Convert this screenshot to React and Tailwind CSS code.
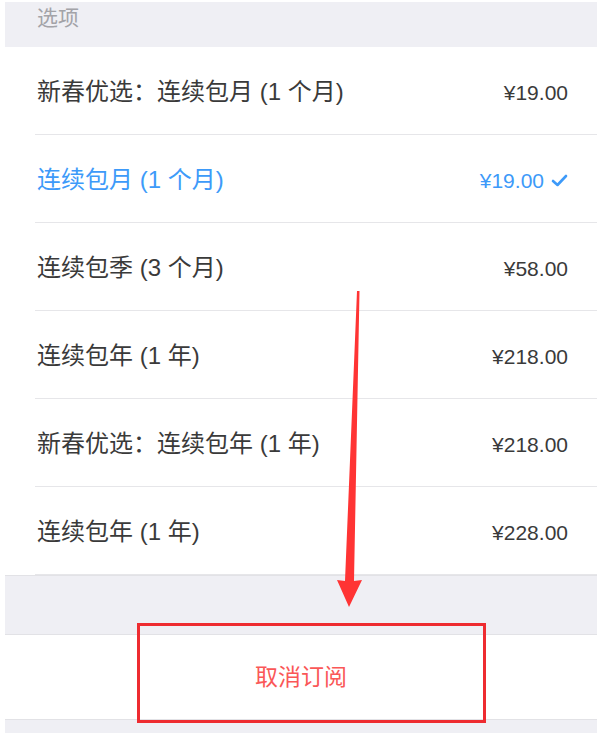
import React from "react";

const options = [
  { label: "新春优选：连续包月 (1 个月)", price: "¥19.00" },
  { label: "连续包月 (1 个月)", price: "¥19.00", selected: true },
  { label: "连续包季 (3 个月)", price: "¥58.00" },
  { label: "连续包年 (1 年)", price: "¥218.00" },
  { label: "新春优选：连续包年 (1 年)", price: "¥218.00" },
  { label: "连续包年 (1 年)", price: "¥228.00" },
];

const cjk = { fontFamily: '"Liberation Sans", "Noto Sans CJK SC", sans-serif' };

const OptionRow = ({ label, price, selected }) => (
  <div className="ml-[30px] h-[88px] flex items-center justify-between pl-[2px] pr-[29px] pt-[3px] border-b border-[#e6e6e9]">
    <span
      className={`text-[24px] leading-none ${selected ? "text-[#3d9af9]" : "text-[#3a3a3a]"}`}
      style={cjk}
    >
      {label}
    </span>
    <div className="flex items-center gap-[7px]">
      <span
        className={`text-[21px] leading-none ${selected ? "text-[#3d9af9]" : "text-[#3a3a3a]"}`}
        style={cjk}
      >
        {price}
      </span>
      {selected ? (
        <svg width="17" height="13" viewBox="0 0 17 13" fill="none">
          <path d="M2 7 L6.5 11 L15 2" stroke="#3d9af9" strokeWidth="2.6" strokeLinecap="round" strokeLinejoin="round" />
        </svg>
      ) : null}
    </div>
  </div>
);

const App = () => {
  return (
    <div className="relative w-[600px] h-[736px] bg-white overflow-hidden" style={cjk}>
      <div className="ml-[5px] w-[592px] pt-[2px]">
        <div className="h-[45px] bg-[#efeff4] pl-[32px] pt-[5px]">
          <span className="text-[21px] leading-none text-[#a3a3a8]">选项</span>
        </div>
        <div className="bg-white">
          {options.map((o, i) => (
            <OptionRow key={i} {...o} />
          ))}
        </div>
        <div className="h-[59px] bg-[#efeff4] border-t border-[#e2e2e6]" />
        <div className="h-[85px] bg-white flex items-center justify-center border-t border-[#e2e2e6]">
          <span className="text-[23px] leading-none text-[#fa5757]">取消订阅</span>
        </div>
        <div className="h-[14px] bg-[#efeff4] border-t border-[#e2e2e6]" />
      </div>

      {/* annotation: red arrow + box */}
      <svg className="absolute left-0 top-0 pointer-events-none" width="600" height="736">
        <polygon
          points="357,291 359.5,291 354,581 362,580 349,607 337,580 345,581"
          fill="#ff3434"
        />
      </svg>
      <div className="absolute left-[137px] top-[623px] w-[349px] h-[100px] border-[3px] border-[#ee2b30] pointer-events-none" />
    </div>
  );
};

export default App;
